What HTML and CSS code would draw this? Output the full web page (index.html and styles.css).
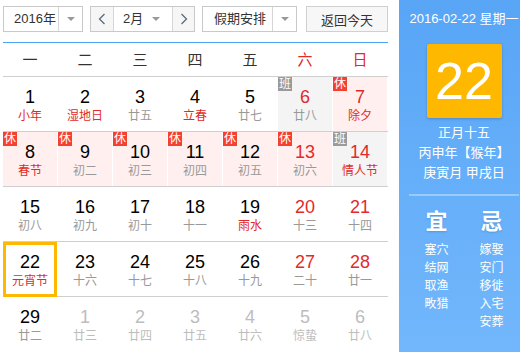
FILE: index.html
```html
<!DOCTYPE html>
<html lang="zh-CN">
<head>
    <meta charset="UTF-8">
    <title>万年历</title>
    <link rel="stylesheet" href="styles.css">
</head>
<body>

<div class="calendar">
    <div class="cal-main">
        <div class="toolbar">
            <div class="select year-select">
                <span class="select-text">2016年</span>
                <span class="select-drop"><i class="tri"></i></span>
            </div>
            <div class="select month-select">
                <span class="nav-btn">
                    <svg width="8" height="12" viewBox="0 0 8 12"><polyline points="6.5,1 1.5,6 6.5,11" fill="none" stroke="#5b6b7c" stroke-width="1.3"/></svg>
                </span>
                <span class="select-text month-text">2月</span>
                <span class="month-drop"><i class="tri"></i></span>
                <span class="nav-btn nav-next">
                    <svg width="8" height="12" viewBox="0 0 8 12"><polyline points="1.5,1 6.5,6 1.5,11" fill="none" stroke="#5b6b7c" stroke-width="1.3"/></svg>
                </span>
            </div>
            <div class="select holiday-select">
                <span class="select-text">假期安排</span>
                <span class="select-drop"><i class="tri"></i></span>
            </div>
            <button class="btn-today">返回今天</button>
        </div>

        <div class="week-head">
            <span>一</span><span>二</span><span>三</span><span>四</span><span>五</span>
            <span class="red">六</span><span class="red">日</span>
        </div>

        <div class="week-row">
            <div class="day"><p class="num">1</p><p class="lunar red">小年</p></div>
            <div class="day"><p class="num">2</p><p class="lunar red">湿地日</p></div>
            <div class="day"><p class="num">3</p><p class="lunar">廿五</p></div>
            <div class="day"><p class="num">4</p><p class="lunar red">立春</p></div>
            <div class="day"><p class="num">5</p><p class="lunar">廿七</p></div>
            <div class="day work"><span class="badge badge-work">班</span><p class="num red">6</p><p class="lunar">廿八</p></div>
            <div class="day rest"><span class="badge">休</span><p class="num red">7</p><p class="lunar red">除夕</p></div>
        </div>

        <div class="week-row">
            <div class="day rest"><span class="badge">休</span><p class="num">8</p><p class="lunar red">春节</p></div>
            <div class="day rest"><span class="badge">休</span><p class="num">9</p><p class="lunar">初二</p></div>
            <div class="day rest"><span class="badge">休</span><p class="num">10</p><p class="lunar">初三</p></div>
            <div class="day rest"><span class="badge">休</span><p class="num">11</p><p class="lunar">初四</p></div>
            <div class="day rest"><span class="badge">休</span><p class="num">12</p><p class="lunar">初五</p></div>
            <div class="day rest"><span class="badge">休</span><p class="num red">13</p><p class="lunar">初六</p></div>
            <div class="day work"><span class="badge badge-work">班</span><p class="num red">14</p><p class="lunar red">情人节</p></div>
        </div>

        <div class="week-row">
            <div class="day"><p class="num">15</p><p class="lunar">初八</p></div>
            <div class="day"><p class="num">16</p><p class="lunar">初九</p></div>
            <div class="day"><p class="num">17</p><p class="lunar">初十</p></div>
            <div class="day"><p class="num">18</p><p class="lunar">十一</p></div>
            <div class="day"><p class="num">19</p><p class="lunar red">雨水</p></div>
            <div class="day"><p class="num red">20</p><p class="lunar">十三</p></div>
            <div class="day"><p class="num red">21</p><p class="lunar">十四</p></div>
        </div>

        <div class="week-row">
            <div class="day today"><p class="num">22</p><p class="lunar red">元宵节</p></div>
            <div class="day"><p class="num">23</p><p class="lunar">十六</p></div>
            <div class="day"><p class="num">24</p><p class="lunar">十七</p></div>
            <div class="day"><p class="num">25</p><p class="lunar">十八</p></div>
            <div class="day"><p class="num">26</p><p class="lunar">十九</p></div>
            <div class="day"><p class="num red">27</p><p class="lunar">二十</p></div>
            <div class="day"><p class="num red">28</p><p class="lunar">廿一</p></div>
        </div>

        <div class="week-row last">
            <div class="day"><p class="num">29</p><p class="lunar">廿二</p></div>
            <div class="day other"><p class="num">1</p><p class="lunar">廿三</p></div>
            <div class="day other"><p class="num">2</p><p class="lunar">廿四</p></div>
            <div class="day other"><p class="num">3</p><p class="lunar">廿五</p></div>
            <div class="day other"><p class="num">4</p><p class="lunar">廿六</p></div>
            <div class="day other"><p class="num">5</p><p class="lunar">惊蛰</p></div>
            <div class="day other"><p class="num">6</p><p class="lunar">廿八</p></div>
        </div>
    </div>

    <div class="cal-side">
        <p class="side-date">2016-02-22 星期一</p>
        <div class="big-day">22</div>
        <p class="side-line">正月十五</p>
        <p class="side-line">丙申年【猴年】</p>
        <p class="side-line">庚寅月 甲戌日</p>
        <div class="side-sep"></div>
        <div class="almanac">
            <div class="alm-col">
                <p class="alm-title">宜</p>
                <p>塞穴</p><p>结网</p><p>取渔</p><p>畋猎</p>
            </div>
            <div class="alm-col">
                <p class="alm-title">忌</p>
                <p>嫁娶</p><p>安门</p><p>移徙</p><p>入宅</p><p>安葬</p>
            </div>
        </div>
    </div>
</div>

</body>
</html>
```

FILE: styles.css
```css
:root {
    --red: #e22a2a;
    --gray: #999;
    --line: #cfcfcf;
    --rest-bg: #fff0ef;
    --work-bg: #f4f4f4;
    --gold: #ffb800;
}

* { margin: 0; padding: 0; box-sizing: border-box; }

body {
    font-family: "Liberation Sans", "Noto Sans CJK SC", sans-serif;
    background: #fff;
    color: #333;
    width: 520px;
    height: 352px;
    overflow: hidden;
}

.calendar { display: flex; height: 352px; }

/* --- Parte izquierda --- */
.cal-main { width: 399px; padding: 6px 0 0 3px; }

.toolbar { display: flex; gap: 7px; height: 26px; }

.select {
    display: flex;
    border: 1px solid #c9c9c9;
    background: #fff;
    height: 26px;
    font-size: 13px;
    line-height: 24px;
}

.select-text { flex: 1; padding-left: 10px; }
.select-drop {
    width: 24px;
    border-left: 1px solid #d6d6d6;
    display: flex; align-items: center; justify-content: center;
}
.tri {
    width: 0; height: 0;
    border-left: 4px solid transparent;
    border-right: 4px solid transparent;
    border-top: 4px solid #999;
}

.year-select { width: 80px; }
.holiday-select { width: 95px; }
.holiday-select .select-text { padding-left: 11px; }

.month-select { width: 105px; }
.nav-btn {
    width: 23px;
    background: #f6f6f6;
    border-right: 1px solid #d6d6d6;
    display: flex; align-items: center; justify-content: center;
}
.nav-btn.nav-next { border-right: none; border-left: 1px solid #d6d6d6; width: 22px; }
.month-text { padding-left: 9px; }
.month-drop { width: 20px; display: flex; align-items: center; }

.btn-today {
    margin-left: 2px;
    width: 82px;
    height: 26px;
    border: 1px solid #d0d0d0;
    background: #f7f7f7;
    font-family: inherit;
    font-size: 13px;
    color: #333;
}

.week-head {
    display: grid;
    grid-template-columns: repeat(7, 54px);
    column-gap: 1px;
    width: 385px;
    margin-top: 10px;
    border-top: 1px solid #4aa2f4;
    border-bottom: 1px solid var(--line);
    height: 35px;
    font-size: 15px;
    line-height: 33px;
    text-align: center;
}

.week-row {
    display: grid;
    grid-template-columns: repeat(7, 54px);
    column-gap: 1px;
    align-items: start;
    width: 385px;
    height: 55px;
    border-bottom: 1px solid var(--line);
}
.week-row.last { border-bottom: none; }

.day {
    position: relative;
    height: 54px;
    padding-top: 10px;
    text-align: center;
}
.day.rest { background: var(--rest-bg); }
.day.work { background: var(--work-bg); }
.day.today {
    height: 55px;
    margin-bottom: -1px;
    border: 3px solid var(--gold);
    padding-top: 7px;
}

.num { font-size: 18px; line-height: 20px; color: #000; }
.lunar { font-size: 12px; line-height: 18px; color: var(--gray); }
.red { color: var(--red); }
.day .num.red, .day .lunar.red { color: var(--red); }
.day.other .num, .day.other .lunar { color: #bdbdbd; }

.badge {
    position: absolute;
    top: 0; left: 0;
    width: 14px; height: 14px;
    background: #f4412f;
    color: #fff;
    font-size: 12px;
    line-height: 14px;
    text-align: center;
}
.badge-work { background: #9a9a9a; }

/* --- Panel derecho --- */
.cal-side {
    flex: 1;
    background: linear-gradient(#58a5f6, #72b7fc);
    color: #fff;
    padding: 9px 1px 0 10px;
    text-align: center;
}

.side-date { font-size: 13px; line-height: 20px; }

.big-day {
    width: 75px;
    height: 74px;
    margin: 15px auto 5px;
    background: var(--gold);
    border-radius: 2px;
    box-shadow: 0 1px 3px rgba(0, 0, 0, 0.2);
    font-size: 52px;
    line-height: 74px;
}

.side-line { font-size: 13px; line-height: 20px; }

.side-sep {
    height: 2px;
    margin-top: 11px;
    background: rgba(255, 255, 255, 0.35);
}

.almanac { display: flex; margin-top: 13px; }
.alm-col { flex: 1; font-size: 12px; line-height: 18px; }
.alm-title {
    font-size: 22px;
    line-height: 26px;
    font-weight: 700;
    margin-bottom: 6px;
    text-shadow: 0 1px 2px rgba(0, 0, 0, 0.15);
}
```
